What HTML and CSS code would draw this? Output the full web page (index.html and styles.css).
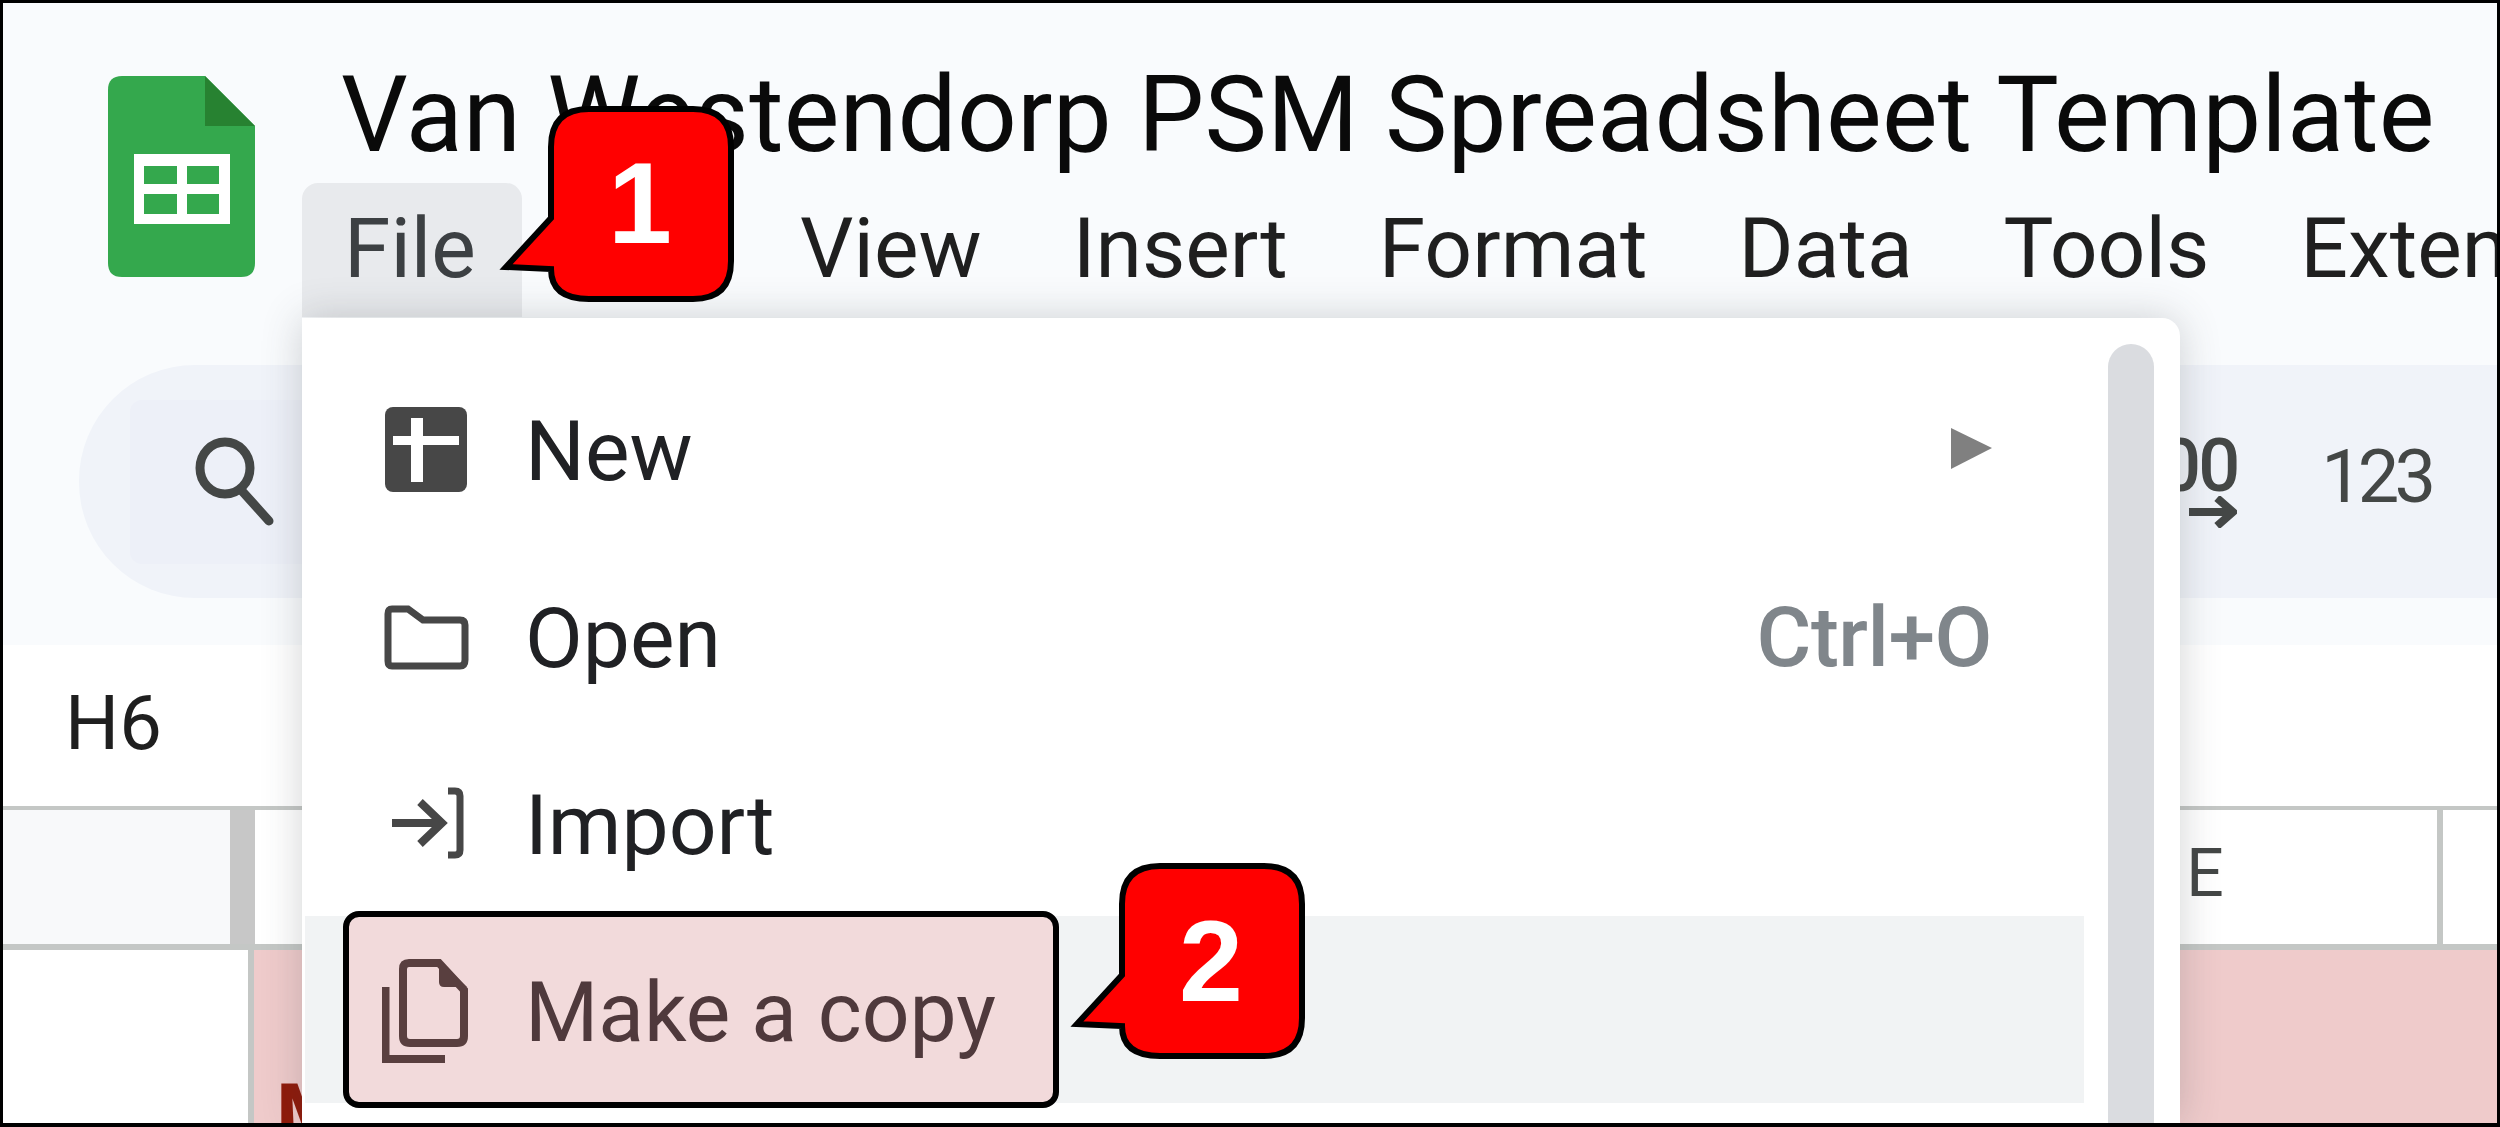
FILE: index.html
```html
<!DOCTYPE html>
<html lang="en">
<head>
    <meta charset="UTF-8">
    <title>Van Westendorp PSM Spreadsheet Template</title>
    <link rel="stylesheet" href="styles.css">
</head>
<body>
    <div class="frame">
        <header class="docbar">
            <svg class="logo" width="147" height="201" viewBox="0 0 147 201">
                <path d="M14 0H97L147 50V187Q147 201 133 201H14Q0 201 0 187V14Q0 0 14 0Z" fill="#34a84d"/>
                <path d="M97 0L147 50H97Z" fill="#278231"/>
                <path d="M26 78H122V148H26Z" fill="#fff"/>
                <path d="M36 90H69V108H36ZM79 90H111V108H79ZM36 118H69V138H36ZM79 118H111V138H79Z" fill="#34a84d"/>
            </svg>
            <div class="doc-titles">
                <div class="doc-name">Van Westendorp PSM Spreadsheet Template</div>
                <nav class="menubar">
                    <span class="menubar-item active">File</span>
                    <span class="menubar-item">Edit</span>
                    <span class="menubar-item">View</span>
                    <span class="menubar-item">Insert</span>
                    <span class="menubar-item">Format</span>
                    <span class="menubar-item">Data</span>
                    <span class="menubar-item">Tools</span>
                    <span class="menubar-item">Extensions</span>
                </nav>
            </div>
        </header>

        <div class="toolbar-wrap">
            <div class="toolbar">
                <div class="search-btn">
                    <svg width="90" height="90" viewBox="0 0 90 90" fill="none" stroke="#444746" stroke-width="9" stroke-linecap="round">
                        <ellipse cx="30" cy="31" rx="25" ry="26"/>
                        <path d="M47 54L74 84"/>
                    </svg>
                </div>
                <div class="toolbar-right">
                    <div class="decimals">
                        <span class="decimals-text">.00</span>
                        <svg width="48" height="32" viewBox="0 0 48 32" fill="none" stroke="#444746" stroke-width="8">
                            <path d="M0 16H44M28 2L44 16L28 30"/>
                        </svg>
                    </div>
                    <span class="format-num">123</span>
                </div>
            </div>
        </div>

        <div class="formula-bar">
            <span class="cell-ref">H6</span>
        </div>

        <div class="col-headers">
            <div class="corner"></div>
            <div class="freeze"></div>
            <div class="col-head col-wide"></div>
            <div class="col-head col-e">E</div>
            <div class="col-head col-last"></div>
        </div>

        <div class="sheet-row">
            <div class="row-head"></div>
            <div class="row-cell">Make</div>
        </div>

        <div class="menu">
            <div class="menu-row">
                <svg class="menu-icon" width="100" height="187" viewBox="0 0 100 187">
                    <rect x="3" y="52" width="82" height="85" rx="8" fill="#474747"/>
                    <path d="M11 81H29V63H41V81H77V90H41V127H29V90H11Z" fill="#fff"/>
                </svg>
                <span class="menu-label">New</span>
                <svg class="submenu-arrow" width="41" height="41" viewBox="0 0 41 41"><path d="M0 0L41 20L0 41Z" fill="#808080"/></svg>
            </div>
            <div class="menu-row">
                <svg class="menu-icon" width="100" height="187" viewBox="0 0 100 187" fill="none" stroke="#474747" stroke-width="7">
                    <path d="M10 67H26L41 78H78Q83 78 83 83V118Q83 124 78 124H10Q6 124 6 119V72Q6 67 10 67Z"/>
                </svg>
                <span class="menu-label">Open</span>
                <span class="shortcut">Ctrl+O</span>
            </div>
            <div class="menu-row">
                <svg class="menu-icon" width="100" height="187" viewBox="0 0 100 187" fill="none" stroke="#474747" stroke-width="8">
                    <path d="M10 94H60M38 73L60 94L38 115"/>
                    <path d="M66 62H73Q78 62 78 67V121Q78 126 73 126H66" stroke-width="7"/>
                </svg>
                <span class="menu-label">Import</span>
            </div>
            <div class="menu-row hovered">
                <svg class="menu-icon" width="100" height="187" viewBox="0 0 100 187" fill="none" stroke="#474747" stroke-width="8">
                    <path d="M27 47H57L82 74V120Q82 127 75 127H28Q21 127 21 120V53Q21 47 27 47Z"/>
                    <path d="M57 44L85 71H62Q57 71 57 66Z" fill="#474747" stroke="none"/>
                    <path d="M3.5 71V143H63"/>
                </svg>
                <span class="menu-label">Make a copy</span>
            </div>
            <div class="menu-scroll"></div>
        </div>

        <div class="highlight"></div>

        <svg class="callout callout-one" width="250" height="204" viewBox="0 0 250 204">
            <path d="M96 6H200Q238 6 238 44V158Q238 196 200 196H96Q58 196 58 166L13 164L58 115V44Q58 6 96 6Z" fill="#f00" stroke="#000" stroke-width="6"/>
            <text x="147" y="140" text-anchor="middle">1</text>
        </svg>
        <svg class="callout callout-two" width="250" height="204" viewBox="0 0 250 204">
            <path d="M96 6H200Q238 6 238 44V158Q238 196 200 196H96Q58 196 58 166L13 164L58 115V44Q58 6 96 6Z" fill="#f00" stroke="#000" stroke-width="6"/>
            <text x="147" y="141" text-anchor="middle">2</text>
        </svg>
    </div>
</body>
</html>
```

FILE: styles.css
```css
html, body {
    margin: 0;
    padding: 0;
    background: white;
}
.frame {
    position: relative;
    box-sizing: border-box;
    width: 2500px;
    height: 1127px;
    border: 3px solid black;
    border-bottom-width: 4px;
    overflow: hidden;
    font-family: Roboto, sans-serif;
    color: #1f1f1f;
    background: white;
}

/* title + menubar */
.docbar {
    display: flex;
    align-items: flex-start;
    height: 362px;
    box-sizing: border-box;
    padding: 73px 0 0 105px;
    background: #f9fbfd;
}
.logo {
    flex: none;
}
.doc-titles {
    margin: -15px 0 0 47px;
    min-width: 0;
}
.doc-name {
    padding-left: 39px;
    font-size: 105px;
    line-height: 110px;
    letter-spacing: 0.15px;
    color: #0a0a0a;
    white-space: nowrap;
}
.menubar {
    display: flex;
    gap: 3px;
    margin-top: 12px;
    white-space: nowrap;
}
.menubar-item {
    padding: 0 46px 0 42px;
    height: 134px;
    font-size: 84px;
    line-height: 132px;
}
.menubar-item.active {
    background: #e8eaed;
    border-radius: 16px 16px 0 0;
    color: #3c4043;
}

/* toolbar */
.toolbar-wrap {
    height: 280px;
    box-sizing: border-box;
    padding: 0 0 47px 76px;
    background: #f9fbfd;
}
.toolbar {
    display: flex;
    align-items: center;
    justify-content: space-between;
    height: 233px;
    background: #f0f3f9;
    border-radius: 116px 0 0 116px;
}
.search-btn {
    display: flex;
    align-items: center;
    width: 200px;
    height: 164px;
    margin-left: 51px;
    padding-left: 65px;
    background: #edf0f8;
    border-radius: 12px;
}
.toolbar-right {
    display: flex;
    align-items: center;
    padding-right: 66px;
}
.decimals {
    display: flex;
    flex-direction: column;
    align-items: flex-end;
    margin-right: 84px;
}
.decimals-text {
    font-size: 74px;
    line-height: 60px;
    letter-spacing: -3px;
    font-weight: 500;
    color: #444746;
}
.format-num {
    font-size: 74px;
    letter-spacing: -5px;
    margin-bottom: 10px;
    color: #444746;
}

/* formula bar */
.formula-bar {
    display: flex;
    align-items: center;
    height: 161px;
    padding: 0 0 6px 62px;
    box-sizing: border-box;
    background: white;
}
.cell-ref {
    font-size: 76px;
}

/* sheet */
.col-headers {
    display: flex;
    height: 144px;
    box-sizing: border-box;
    border-top: 4px solid #c4c7c5;
    border-bottom: 6px solid #c4c7c5;
}
.corner {
    width: 227px;
    background: #f8f9fa;
}
.freeze {
    width: 25px;
    background: #c7c7c7;
}
.col-head {
    box-sizing: border-box;
    border-right: 6px solid #c4c7c5;
    background: white;
}
.col-wide {
    width: 1718px;
}
.col-e {
    width: 470px;
    text-align: center;
    font-size: 66px;
    line-height: 128px;
    color: #444746;
}
.col-last {
    flex: 1;
    border-right: none;
}
.sheet-row {
    display: flex;
    height: 174px;
    overflow: hidden;
}
.row-head {
    width: 251px;
    box-sizing: border-box;
    border-right: 6px solid #c4c7c5;
}
.row-cell {
    flex: 1;
    padding: 115px 0 0 22px;
    background: #efcbcb;
    color: #8f1a0a;
    font-size: 84px;
    font-weight: bold;
}

/* file menu */
.menu {
    position: absolute;
    left: 299px;
    top: 315px;
    width: 1878px;
    bottom: 0;
    box-sizing: border-box;
    padding-top: 37px;
    background: white;
    border-radius: 0 18px 0 0;
    box-shadow: 0 0 40px rgba(60, 64, 67, 0.23);
}
.menu-row {
    display: flex;
    align-items: center;
    height: 187px;
    width: 1779px;
    margin-left: 3px;
    box-sizing: border-box;
    padding: 0 92px 0 77px;
}
.menu-row.hovered {
    background: #f1f3f4;
}
.menu-icon {
    flex: none;
    margin-right: 43px;
}
.menu-label {
    flex: 1;
    padding-top: 5px;
    font-size: 84px;
    color: #202124;
}
.hovered .menu-label {
    color: #3c4043;
}
.shortcut {
    padding-top: 3px;
    font-size: 84px;
    font-weight: 500;
    letter-spacing: -0.5px;
    color: #80868b;
}
.menu-scroll {
    position: absolute;
    top: 26px;
    right: 26px;
    bottom: 0;
    width: 46px;
    background: #dadce0;
    border-radius: 23px 23px 0 0;
}

/* annotations on top of the screenshot */
.highlight {
    position: absolute;
    left: 340px;
    top: 908px;
    width: 716px;
    height: 197px;
    box-sizing: border-box;
    border: 6px solid black;
    border-radius: 16px;
    background: rgba(255, 0, 0, 0.1);
}
.callout {
    position: absolute;
}
.callout text {
    font-family: "Liberation Sans", Arial, sans-serif;
    font-weight: bold;
    font-size: 115px;
    fill: white;
}
.callout-one {
    left: 490px;
    top: 100px;
}
.callout-two {
    left: 1061px;
    top: 857px;
}
```
